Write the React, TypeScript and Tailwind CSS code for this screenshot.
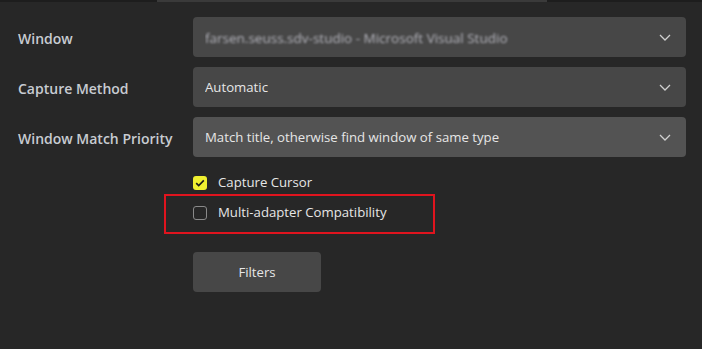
import React from 'react';

const font = { fontFamily: '"Segoe UI", "Open Sans", "Noto Sans", sans-serif' };

function Chevron() {
  return (
    <svg width="12" height="7" viewBox="0 0 12 7" fill="none" className="shrink-0">
      <path d="M1 1l5 5 5-5" stroke="#d0d0d0" strokeWidth="1.3" />
    </svg>
  );
}

function Row({ label, children, hover }: { label: string; children: React.ReactNode; hover?: boolean }) {
  return (
    <div className="flex items-center h-10">
      <div className="w-[193px] shrink-0 pl-[18px] pt-[2px] text-[14px] font-semibold text-[#c8ccd2]">{label}</div>
      <div
        className={`flex-1 h-10 rounded-[4px] flex items-center pl-[12px] pr-[15px] ${
          hover ? 'bg-[#535353]' : 'bg-[#474747]'
        }`}
      >
        <div className="flex-1 pt-[2px] text-[13.2px] text-[#e6e6e6] truncate">{children}</div>
        <Chevron />
      </div>
    </div>
  );
}

export default function App() {
  return (
    <div className="w-[702px] h-[349px] bg-[#272727] overflow-hidden relative" style={font}>
      {/* top strip */}
      <div className="flex h-[2px]">
        <div className="w-[157px] bg-[#1d1d1d]" />
        <div className="w-[390px] bg-[#3a3a3a]" />
        <div className="flex-1 bg-[#1d1d1d]" />
      </div>

      <div className="flex flex-col gap-[10px] pt-[15px] pr-[16px]">
        <Row label="Window">
          <span className="blur-[1.3px] text-[13.5px] text-[#b4b4bc]">farsen.seuss.sdv-studio - Microsoft Visual Studio</span>
        </Row>
        <Row label="Capture Method">Automatic</Row>
        <Row label="Window Match Priority" hover>
          Match title, otherwise find window of same type
        </Row>
      </div>

      <div className="pl-[193px] pt-[19px] flex flex-col">
        <div className="flex items-center gap-[11px] h-[14px]">
          <div className="w-[14px] h-[14px] rounded-[3px] bg-[#f0f030] flex items-center justify-center">
            <svg width="10" height="8" viewBox="0 0 10 8" fill="none">
              <path d="M1.2 4.2l2.5 2.4L8.8 1.4" stroke="#1a1a1a" strokeWidth="1.6" />
            </svg>
          </div>
          <span className="text-[13.2px] text-[#e6e6e6]">Capture Cursor</span>
        </div>
        <div className="flex items-center gap-[11px] h-[14px] mt-[16px]">
          <div className="w-[14px] h-[14px] rounded-[3px] border border-[#8a8a8a]" />
          <span className="text-[13.2px] text-[#e6e6e6]">Multi-adapter Compatibility</span>
        </div>
        <button className="mt-[32px] pt-[1px] w-[128px] h-[40px] rounded-[4px] bg-[#474747] text-[13.2px] text-[#e6e6e6]">
          Filters
        </button>
      </div>

      {/* red highlight annotation */}
      <div className="absolute left-[164px] top-[194px] w-[271px] h-[40px] border-2 border-[#e0141e]" />
    </div>
  );
}
